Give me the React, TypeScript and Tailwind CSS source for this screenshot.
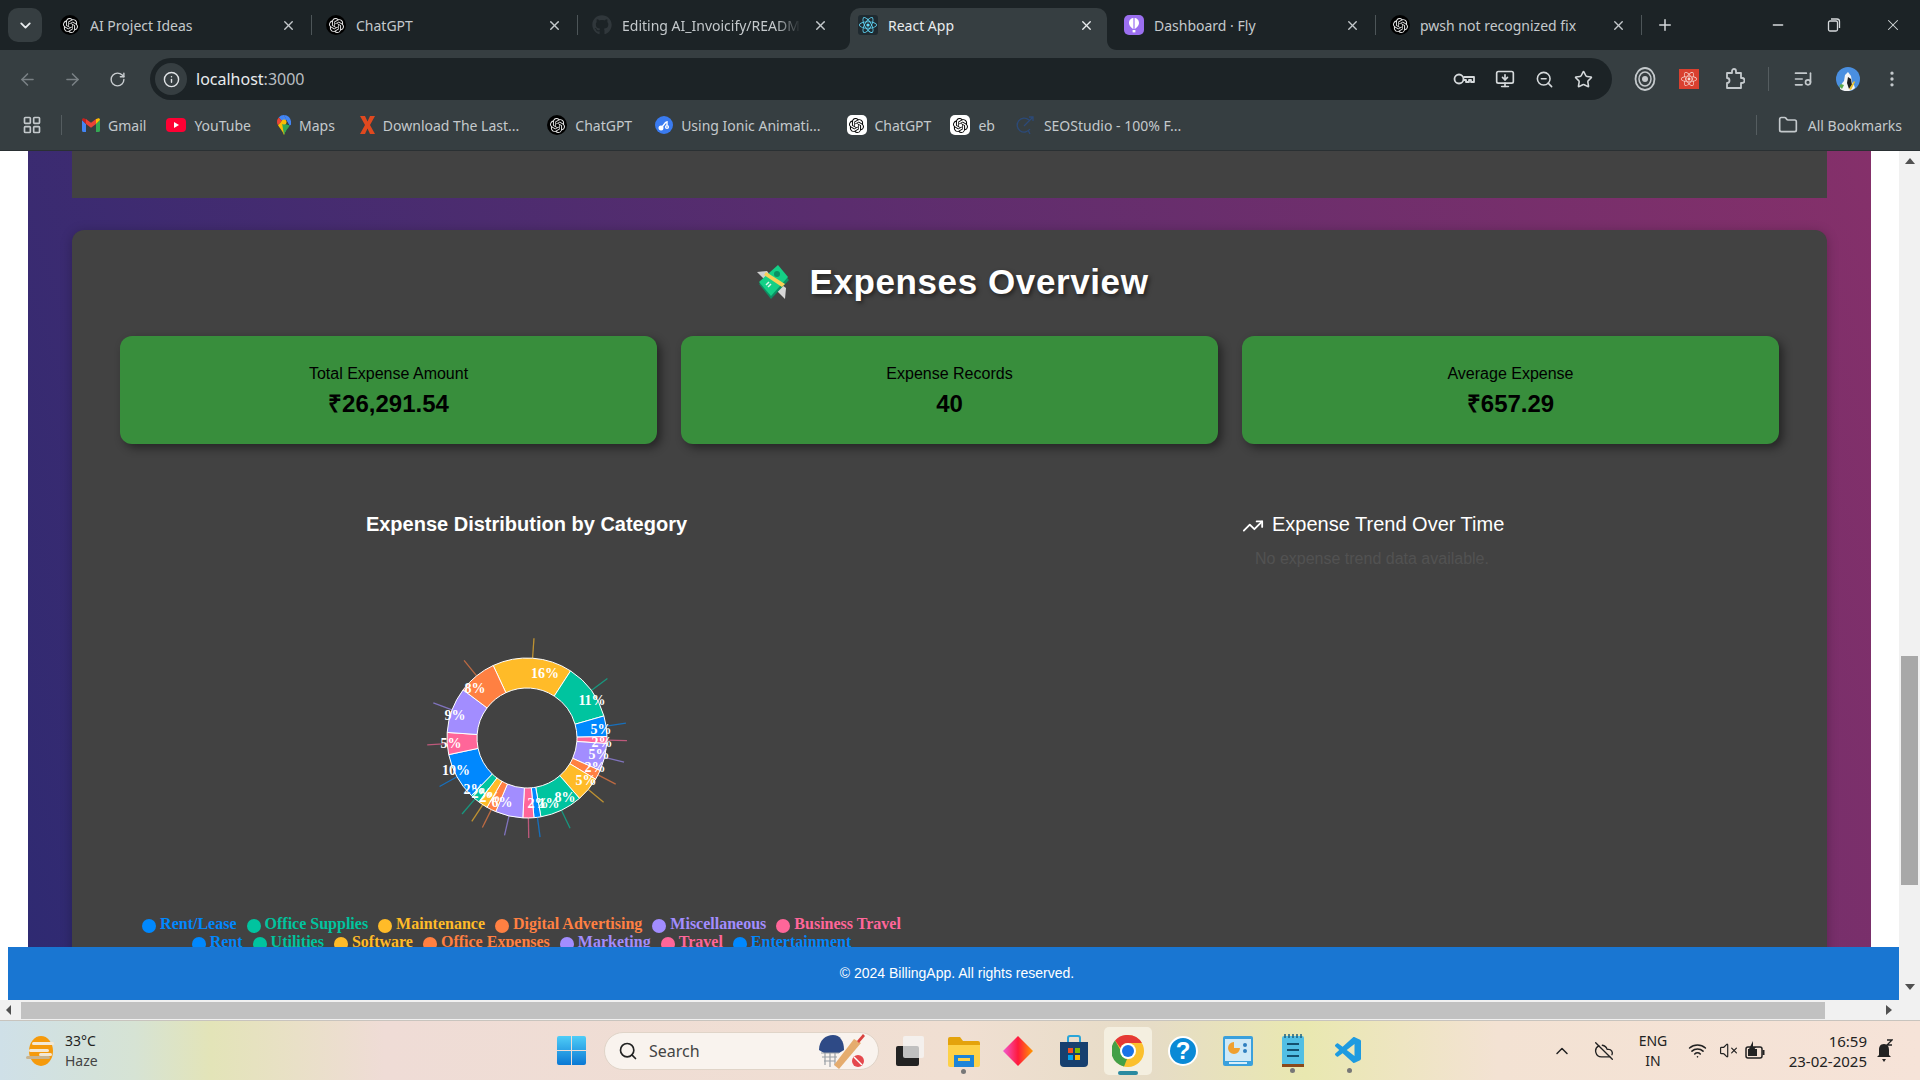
import React from 'react';
import { SiOpenai } from 'react-icons/si';
import { FaGithub, FaReact } from 'react-icons/fa';
import { VscVscode } from 'react-icons/vsc';
import {
  ArrowLeft, ArrowRight, RotateCw, Info, MonitorDown, ZoomOut, Star, ListMusic,
  EllipsisVertical, LayoutGrid, Folder, Plus, Minus, X, ChevronDown, ChevronUp, Search, TrendingUp,
  Wifi, VolumeX, CloudOff,
} from 'lucide-react';

const BLUE = '#0088fe';
const GREEN = '#00c49f';
const YELLOW = '#ffbb28';
const ORANGE = '#ff8042';
const PURPLE = '#a28dff';
const PINK = '#ff6699';

// angles are clockwise from the top
const slices = [
  { a: -25, b: 33, c: YELLOW },
  { a: 33, b: 74, c: GREEN },
  { a: 74, b: 89, c: BLUE },
  { a: 89, b: 94, c: PINK },
  { a: 94, b: 114, c: PURPLE },
  { a: 114, b: 121, c: ORANGE },
  { a: 121, b: 139, c: YELLOW },
  { a: 139, b: 170, c: GREEN },
  { a: 170, b: 175, c: BLUE },
  { a: 175, b: 183, c: PINK },
  { a: 183, b: 203, c: PURPLE },
  { a: 203, b: 210, c: ORANGE },
  { a: 210, b: 217, c: YELLOW },
  { a: 217, b: 224, c: GREEN },
  { a: 224, b: 258, c: BLUE },
  { a: 258, b: 274, c: PINK },
  { a: 274, b: 307, c: PURPLE },
  { a: 307, b: 335, c: ORANGE },
];

const pieLabels = [
  { t: '16%', x: 18, y: -65 },
  { t: '11%', x: 65, y: -38 },
  { t: '5%', x: 74, y: -9 },
  { t: '2%', x: 75, y: 4 },
  { t: '5%', x: 72, y: 16 },
  { t: '2%', x: 68, y: 29 },
  { t: '5%', x: 59, y: 42 },
  { t: '8%', x: 38, y: 59 },
  { t: '1%', x: 22, y: 65 },
  { t: '2%', x: 11, y: 65 },
  { t: '6%', x: -25, y: 64 },
  { t: '2%', x: -37, y: 59 },
  { t: '2%', x: -45, y: 55 },
  { t: '2%', x: -53, y: 51 },
  { t: '10%', x: -71, y: 32 },
  { t: '5%', x: -76, y: 5 },
  { t: '9%', x: -72, y: -23 },
  { t: '8%', x: -52, y: -50 },
];

const legend = [
  { name: 'Rent/Lease', c: BLUE },
  { name: 'Office Supplies', c: GREEN },
  { name: 'Maintenance', c: YELLOW },
  { name: 'Digital Advertising', c: ORANGE },
  { name: 'Miscellaneous', c: PURPLE },
  { name: 'Business Travel', c: PINK },
  { name: 'Rent', c: BLUE },
  { name: 'Utilities', c: GREEN },
  { name: 'Software', c: YELLOW },
  { name: 'Office Expenses', c: ORANGE },
  { name: 'Marketing', c: PURPLE },
  { name: 'Travel', c: PINK },
  { name: 'Entertainment', c: BLUE },
];

const polar = (r: number, deg: number) => {
  const rad = (deg * Math.PI) / 180;
  return [Math.sin(rad) * r, -Math.cos(rad) * r];
};

const slicePath = (a: number, b: number) => {
  const [x1, y1] = polar(80, a);
  const [x2, y2] = polar(80, b);
  const [x3, y3] = polar(50, b);
  const [x4, y4] = polar(50, a);
  return `M${x1} ${y1}A80 80 0 0 1 ${x2} ${y2}L${x3} ${y3}A50 50 0 0 0 ${x4} ${y4}Z`;
};

const DonutChart = () => (
  <svg width="400" height="375" viewBox="-200 -200 400 375" className="block">
    {slices.map((s, i) => {
      const mid = (s.a + s.b) / 2;
      const [x1, y1] = polar(80, mid);
      const [x2, y2] = polar(100, mid);
      return <line key={i} x1={x1} y1={y1} x2={x2} y2={y2} stroke={s.c} strokeOpacity="0.65" strokeWidth="1.3" />;
    })}
    {slices.map((s, i) => (
      <path key={i} d={slicePath(s.a, s.b)} fill={s.c} stroke="#fff" strokeWidth="1" />
    ))}
    {pieLabels.map((l, i) => (
      <text key={i} x={l.x} y={l.y} fill="#fff" fontSize="14" fontWeight="700" textAnchor="middle" dominantBaseline="central" fontFamily="'Liberation Serif', serif">
        {l.t}
      </text>
    ))}
  </svg>
);

const GptIcon = ({ light }: { light?: boolean }) => (
  <span className={`flex h-5 w-5 shrink-0 items-center justify-center ${light ? 'rounded-[5px] bg-white text-black' : 'rounded-full bg-black text-[#e8e8e8]'}`}>
    <SiOpenai size={15} />
  </span>
);

const FlyIcon = () => (
  <span className="flex h-5 w-5 shrink-0 items-center justify-center rounded-[5px] bg-[#9b6ff0]">
    <svg width="12" height="16" viewBox="0 0 12 16">
      <path d="M6 1C3 1 1 3 1 6c0 3 3 5 4 6h2c1-1 4-3 4-6 0-3-2-5-5-5z" fill="#fff" />
      <path d="M6 1v11" stroke="#9b6ff0" strokeWidth="1.2" />
      <rect x="4.6" y="13" width="2.8" height="2.4" fill="#fff" />
    </svg>
  </span>
);

const Tab = ({ icon, title, active, fade, sep }: { icon: React.ReactNode; title: string; active?: boolean; fade?: boolean; sep?: boolean }) => (
  <div className="relative flex h-[42px] w-[266px] shrink-0 pl-[10px]">
    {active && (
      <div className="absolute bottom-0 left-[2px] right-[7px] top-0 rounded-t-[10px] bg-[#363e41]">
        <svg className="absolute bottom-0 left-[-10px]" width="10" height="10" viewBox="0 0 10 10"><path d="M0 10C6 10 10 6 10 0V10Z" fill="#363e41" /></svg>
        <svg className="absolute bottom-0 right-[-10px]" width="10" height="10" viewBox="0 0 10 10"><path d="M10 10C4 10 0 6 0 0V10Z" fill="#363e41" /></svg>
      </div>
    )}
    <div className="relative flex h-full w-full items-center pb-2">
      {icon}
      <span className={`ml-[10px] w-[188px] overflow-hidden whitespace-nowrap text-[14px] ${active ? 'text-[#e9ecee]' : 'text-[#c4c9cc]'} ${fade ? '[mask-image:linear-gradient(90deg,#000_82%,transparent_95%)]' : ''}`}>
        {title}
      </span>
      <X size={15} strokeWidth={2.2} className={`ml-[3px] ${active ? 'text-[#e9ecee]' : 'text-[#c4c9cc]'}`} />
      {sep && <div className="ml-[15px] h-5 w-px bg-[#4d5558]" />}
    </div>
  </div>
);

const Bookmark = ({ icon, label, className }: { icon: React.ReactNode; label: string; className: string }) => (
  <div className={`flex shrink-0 items-center ${className}`}>
    {icon}
    <span className="ml-2 whitespace-nowrap text-[14px] text-[#c4c9cc]">{label}</span>
  </div>
);

const GmailIcon = () => (
  <svg width="18" height="14" viewBox="0 0 18 14" className="shrink-0">
    <path d="M0 2v10.500a1.500 1.500 0 0 0 1.500 1.500H4V6z" fill="#4285f4" />
    <path d="M14 6v8h2.500a1.500 1.500 0 0 0 1.500-1.500V2z" fill="#34a853" />
    <path d="M14 1v5l4-4c0-1.500-1.500-2.200-2.700-1.300z" fill="#fbbc04" />
    <path d="M4 6V1l5 3.800L14 1v5L9 9.800z" fill="#ea4335" />
    <path d="M0 2l4 4V1L2.700.700C1.500-.2 0 .500 0 2z" fill="#c5221f" />
  </svg>
);

const YoutubeIcon = () => (
  <svg width="20" height="14" viewBox="0 0 20 14" className="shrink-0">
    <rect width="20" height="14" rx="4" fill="#ff0033" />
    <path d="M8 4l5 3-5 3z" fill="#fff" />
  </svg>
);

const MapsIcon = () => (
  <svg width="14" height="20" viewBox="0 0 14 20" className="shrink-0">
    <path d="M7 0a7 7 0 0 1 7 7c0 1.500-.5 2.500-1.200 3.600L9.500 5z" fill="#4285f4" />
    <path d="M7 0a7 7 0 0 0-5.300 2.400L4.500 5.500 9.500 5A3 3 0 0 1 12.800 10.600z" fill="#4285f4" />
    <path d="M1.700 2.400A7 7 0 0 0 0 7c0 1.300.4 2.300 1 3.300L5 6z" fill="#ea4335" />
    <path d="M1 10.300C2.500 13 5.500 15.500 7 20l2-5.500-4-8.500z" fill="#fbbc04" />
    <path d="M7 20c1.500-4.500 4.300-6.500 5.800-9.400L5 8z" fill="#34a853" />
    <circle cx="7" cy="7" r="2.500" fill="#fbbc04" />
  </svg>
);

const XLogo = () => (
  <svg width="15" height="18" viewBox="0 0 15 18" className="shrink-0">
    <path d="M0 0h5l2.500 5.500L10 0h5l-5 9 5 9h-5l-2.500-5.500L5 18H0l5-9z" fill="#e0491f" />
  </svg>
);

const IonicIcon = () => (
  <span className="flex h-[18px] w-[18px] shrink-0 items-center justify-center rounded-full bg-[#3a7bf0]">
    <svg width="12" height="12" viewBox="0 0 12 12" fill="none" stroke="#fff" strokeWidth="1.4">
      <circle cx="3" cy="9" r="1.800" fill="#fff" />
      <circle cx="9" cy="8" r="1.400" />
      <path d="M4 8l4-5M9 2v4" />
    </svg>
  </span>
);

const SeoIcon = () => (
  <svg width="20" height="20" viewBox="0 0 20 20" fill="none" stroke="#2c4a78" strokeWidth="1.300" className="shrink-0">
    <path d="M13 5a7 7 0 1 0 1 9" />
    <path d="M8 11L17 2M13 2h4v4M12 15l2 4" />
  </svg>
);

const ExtensionRed = () => (
  <span className="flex h-5 w-5 items-center justify-center bg-[#d9402f] text-[#f6d9d4]">
    <FaReact size={16} />
  </span>
);

const PasswordKey = () => (
  <svg width="22" height="16" viewBox="0 0 22 16" fill="none" stroke="currentColor" strokeWidth="1.800">
    <circle cx="6" cy="8" r="4.500" />
    <path d="M10.500 6H21v5h-3V9h-2v2h-3V9h-2.500" strokeLinejoin="round" />
  </svg>
);

const TargetRings = () => (
  <svg width="22" height="24" viewBox="0 0 22 24" fill="none" stroke="currentColor">
    <ellipse cx="11" cy="12" rx="9.500" ry="11" strokeWidth="1.800" />
    <ellipse cx="11" cy="12" rx="6" ry="7" strokeWidth="1.500" />
    <circle cx="11" cy="12" r="3" fill="currentColor" stroke="none" />
  </svg>
);

const ExtensionPuzzle = () => (
  <svg width="20" height="22" viewBox="0 0 20 22" fill="none" stroke="currentColor" strokeWidth="1.800" strokeLinejoin="round">
    <path d="M2 5h5V3a2 2 0 0 1 4 0v2h5v5h1a2.500 2.500 0 0 1 0 5h-1v5H2v-5a2.500 2.500 0 0 0 0-5z" />
  </svg>
);

const Avatar = () => (
  <svg width="24" height="24" viewBox="0 0 24 24">
    <circle cx="12" cy="12" r="12" fill="#4a8fe0" />
    <path d="M4 22c1-5 3-7 4-8l1-6 3-3 3 4 1 6 2 3 1 3a12 12 0 0 1-15 1z" fill="#f4f4f4" />
    <path d="M12 10l3 2 1 6-3 4-2-6z" fill="#1e1e1e" />
    <path d="M13 22l5-8 1 1-4 8z" fill="#e8c02e" />
    <path d="M3 19l3 3 2-4-3-1z" fill="#5aa84a" />
  </svg>
);

const WindowsLogo = () => (
  <svg width="29" height="29" viewBox="0 0 29 29">
    <defs>
      <linearGradient id="win" x1="0" y1="0" x2="0" y2="1">
        <stop offset="0" stopColor="#4fcdf7" />
        <stop offset="1" stopColor="#0a78d4" />
      </linearGradient>
    </defs>
    <path d="M0 2a2 2 0 0 1 2-2h12v14H0zM15 0h12a2 2 0 0 1 2 2v12H15zM0 15h14v14H2a2 2 0 0 1-2-2zM15 15h14v12a2 2 0 0 1-2 2H15z" fill="url(#win)" />
  </svg>
);

const WeatherIcon = () => (
  <svg width="32" height="32" viewBox="0 0 32 32">
    <ellipse cx="17" cy="16" rx="12" ry="15" fill="#f59a0c" />
    <rect x="8" y="7" width="22" height="3" rx="1.500" fill="#f3e8d6" />
    <rect x="5" y="14" width="20" height="3" rx="1.500" fill="#f3e8d6" />
    <rect x="15" y="18" width="13" height="3" rx="1.500" fill="#f3e8d6" />
    <rect x="2" y="21" width="24" height="3" rx="1.500" fill="#c9b48f" />
  </svg>
);

const CricketIcon = () => (
  <svg width="52" height="38" viewBox="0 0 52 38">
    <path d="M2 18C2 8 9 3 16 3s11 6 11 15l-5 3H7z" fill="#2e4a86" />
    <path d="M4 21h18M5 25h15M7 29h11M8 21v12M13 21v14M18 21v12" stroke="#9aa0a6" fill="none" strokeWidth="1.200" />
    <path d="M17 33l5 4 22-26-7-4z" fill="#e5ac6e" />
    <path d="M40 9l6-7 2 2-6 7z" fill="#d9433f" />
    <circle cx="41" cy="29" r="6" fill="#e5484d" />
    <path d="M37 25l8 8" stroke="#fff" strokeWidth="1.500" />
  </svg>
);

const TaskViewIcon = () => (
  <svg width="30" height="30" viewBox="0 0 30 30">
    <rect x="2" y="10" width="23" height="20" rx="2" fill="#222" />
    <rect x="9" y="0" width="21" height="22" rx="2" fill="#f5f5f5" fillOpacity="0.75" />
  </svg>
);

const FolderIcon = () => (
  <svg width="32" height="32" viewBox="0 0 32 32">
    <path d="M0 4a2 2 0 0 1 2-2h10l3 4h15a2 2 0 0 1 2 2v4H0z" fill="#e4a30c" />
    <path d="M0 10h32v20a2 2 0 0 1-2 2H2a2 2 0 0 1-2-2z" fill="#fdd148" />
    <rect x="6" y="20" width="20" height="12" fill="#1c84d8" />
    <rect x="10" y="23" width="12" height="3" fill="#fdd148" />
  </svg>
);

const DiamondIcon = () => (
  <svg width="30" height="30" viewBox="0 0 30 30">
    <defs>
      <linearGradient id="dia" x1="0" y1="0" x2="1" y2="0">
        <stop offset="0" stopColor="#f25ad0" />
        <stop offset="0.5" stopColor="#ff1a3c" />
        <stop offset="1" stopColor="#ff9a00" />
      </linearGradient>
    </defs>
    <path d="M15 0l15 15-15 15L0 15z" fill="url(#dia)" />
  </svg>
);

const StoreIcon = () => (
  <svg width="30" height="32" viewBox="0 0 30 32">
    <path d="M9 8V3a2 2 0 0 1 2-2h8a2 2 0 0 1 2 2v5" fill="none" stroke="#2aa5d8" strokeWidth="2" />
    <path d="M1 7h28v21a4 4 0 0 1-4 4H5a4 4 0 0 1-4-4z" fill="#17406f" />
    <rect x="9" y="13" width="5" height="5" fill="#f25022" />
    <rect x="16" y="13" width="5" height="5" fill="#7fba00" />
    <rect x="9" y="20" width="5" height="5" fill="#00a4ef" />
    <rect x="16" y="20" width="5" height="5" fill="#ffb900" />
  </svg>
);

const ChromeIcon = () => (
  <svg width="32" height="32" viewBox="0 0 32 32">
    <circle cx="16" cy="16" r="16" fill="#fbc02d" />
    <path d="M16 0a16 16 0 0 1 13.900 8H16a8 8 0 0 0-7.500 5L3 5.500A16 16 0 0 1 16 0z" fill="#e53935" />
    <path d="M3 5.500l6 10.500a7 7 0 0 0 6 8l-3 7.500A16 16 0 0 1 3 5.500z" fill="#43a047" />
    <circle cx="16" cy="16" r="8" fill="#fff" />
    <circle cx="16" cy="16" r="6" fill="#1a73e8" />
  </svg>
);

const HelpIcon = () => (
  <span className="flex h-[30px] w-[30px] items-center justify-center rounded-full border-2 border-white bg-[#0a8ad6] text-[24px] font-bold leading-none text-white [font-family:'Liberation_Sans',sans-serif]">?</span>
);

const ChartIcon = () => (
  <svg width="30" height="30" viewBox="0 0 30 30">
    <rect width="30" height="30" rx="2" fill="#3aa0dc" />
    <rect x="2" y="3" width="26" height="22" fill="#cfe9f7" />
    <path d="M11 6a6 6 0 1 0 6 6h-6z" fill="#f0a030" />
    <circle cx="22" cy="9" r="2" fill="#2f7fc0" />
    <circle cx="22" cy="15" r="2" fill="#2f7fc0" />
    <rect x="6" y="26" width="18" height="2" fill="#d8eefa" />
  </svg>
);

const NotepadIcon = () => (
  <svg width="24" height="34" viewBox="0 0 24 34">
    <rect x="1" y="2" width="22" height="31" rx="2" fill="#52bfe4" />
    <rect x="1" y="30" width="22" height="3" fill="#8a4a1c" />
    <path d="M4 0v4M8 0v4M12 0v4M16 0v4M20 0v4" stroke="#1a5f80" strokeWidth="1.500" />
    <path d="M6 10h12M6 16h12M6 22h12" stroke="#14506f" strokeWidth="2" />
  </svg>
);

const BatteryIcon = () => (
  <svg width="20" height="20" viewBox="0 0 20 20">
    <rect x="1" y="6" width="16" height="11" rx="2" fill="none" stroke="#222" strokeWidth="1.500" />
    <rect x="3" y="8" width="9" height="7" fill="#222" />
    <rect x="17.500" y="9" width="2" height="5" fill="#222" />
    <path d="M8 0L4 8h3l-1 5 5-7H8z" fill="#222" />
  </svg>
);

const FocusBell = () => (
  <svg width="18" height="24" viewBox="0 0 18 24">
    <path d="M9 5c-4 0-5 3-5 6v5l-2 2h14l-2-2v-5c0-3-1-6-5-6z" fill="#222" />
    <path d="M7 20h4l-2 3z" fill="#222" />
    <path d="M12 1h5l-5 5h5" fill="none" stroke="#222" strokeWidth="1.300" />
  </svg>
);

const MoneyWings = () => (
  <svg width="32" height="34" viewBox="0 0 32 34">
    <path d="M0 7l10-1 6 8-8 1z" fill="#cfcfcf" />
    <path d="M28 34l1-11-8-6-2 8z" fill="#d6d6d6" />
    <path d="M2 19L21 2l11 13-18 19z" fill="#0d8f63" />
    <path d="M2 17L21 0l10 12-17 19z" fill="#14cf86" />
    <circle cx="20" cy="9" r="3" fill="#0d8f63" />
    <path d="M9 7l19 12-3 3L7 10z" fill="#f8d057" />
    <path d="M9 20l3-3M11 22l3-3" stroke="#dff8ec" strokeWidth="1.500" />
  </svg>
);

const ScrollTriangle = ({ dir }: { dir: 'up' | 'down' | 'left' | 'right' }) => {
  const pts = { up: '0,7 5,1 10,7', down: '0,2 10,2 5,8', left: '7,0 7,10 2,5', right: '2,0 2,10 8,5' }[dir];
  return (
    <svg width="10" height="10" viewBox="0 0 10 10" className="shrink-0">
      <polygon points={pts} fill="#505050" />
    </svg>
  );
};

const StatCard = ({ label, value }: { label: string; value: string }) => (
  <div className="flex h-[108px] flex-1 flex-col items-center rounded-xl bg-[#388e3c] pt-[28px] text-black shadow-[4px_4px_10px_rgba(0,0,0,0.45)]">
    <span className="text-[16px] leading-[20px]">{label}</span>
    <span className="mt-1 text-[24px] font-bold leading-[32px]">{value}</span>
  </div>
);

const App = () => {
  return (
    <div className="flex h-screen flex-col overflow-hidden bg-white [font-family:'Liberation_Sans',Arial,sans-serif]">
      <div className="shrink-0 [font-family:'Noto_Sans',sans-serif]">
        {/* Tab strip */}
        <div className="flex h-[50px] items-end bg-[#1c2326] pl-2">
          <div className="mb-2 flex h-[34px] w-[34px] shrink-0 items-center justify-center rounded-[10px] bg-[#363e41] text-[#e9ecee]">
            <ChevronDown size={17} strokeWidth={2.6} />
          </div>
          <div className="ml-2 flex">
            <Tab icon={<GptIcon />} title="AI Project Ideas" sep />
            <Tab icon={<GptIcon />} title="ChatGPT" sep />
            <Tab icon={<FaGithub size={20} className="shrink-0 text-[#30373b]" />} title="Editing AI_Invoicify/README.md" fade />
            <Tab icon={<span className="flex h-5 w-5 shrink-0 items-center justify-center rounded-[3px] bg-[#1f2a30] text-[#61dafb]"><FaReact size={18} /></span>} title="React App" active />
            <Tab icon={<FlyIcon />} title="Dashboard · Fly" sep />
            <Tab icon={<GptIcon />} title="pwsh not recognized fix" sep />
          </div>
          <div className="mb-2 flex h-[34px] items-center text-[#d5d9db]">
            <Plus size={18} className="ml-[10px]" />
          </div>
          <div className="mb-2 ml-[96px] flex h-[34px] items-center text-[#d5d9db]">
            <Minus size={16} />
            <svg width="16" height="16" viewBox="0 0 16 16" fill="none" stroke="currentColor" strokeWidth="1.300" className="ml-[40px]">
              <rect x="2.500" y="4" width="9" height="10" rx="1.500" />
              <path d="M5 2h6a2.500 2.500 0 0 1 2.500 2.500V11" />
            </svg>
            <X size={18} strokeWidth={1.4} className="ml-[42px]" />
          </div>
        </div>

        {/* Toolbar */}
        <div className="flex h-[50px] items-end bg-[#363e41] pl-[5px]">
          <div className="flex h-[42px] items-center">
            <div className="flex w-[45px] justify-center text-[#798084]"><ArrowLeft size={19} /></div>
            <div className="flex w-[45px] justify-center text-[#798084]"><ArrowRight size={19} /></div>
            <div className="flex w-[45px] justify-center text-[#c9cdd0]"><RotateCw size={17} /></div>
          </div>
          <div className="ml-[10px] flex h-[42px] w-[1462px] shrink-0 items-center rounded-full bg-[#1c2326] pl-[5px]">
            <span className="flex h-8 w-8 items-center justify-center rounded-full bg-[#363e41] text-[#e1e4e6]"><Info size={17} /></span>
            <span className="ml-[9px] text-[16px] text-[#e9ecee]">localhost<span className="text-[#b9bec1]">:3000</span></span>
            <div className="ml-auto mr-[19px] flex items-center gap-[20px] text-[#d5d9db]">
              <PasswordKey />
              <MonitorDown size={20} />
              <ZoomOut size={19} />
              <Star size={19} />
            </div>
          </div>
          <div className="ml-[22px] flex h-[42px] items-center text-[#c4c9cc]">
            <TargetRings />
            <span className="ml-[23px]"><ExtensionRed /></span>
            <span className="ml-[26px]"><ExtensionPuzzle /></span>
            <span className="ml-[23px] h-6 w-px bg-[#555d60]" />
            <ListMusic size={20} className="ml-[24px]" />
            <span className="ml-[23px]"><Avatar /></span>
            <EllipsisVertical size={20} className="ml-[22px]" />
          </div>
        </div>

        {/* Bookmarks */}
        <div className="flex h-[50px] items-center bg-[#363e41]">
          <LayoutGrid size={20} className="ml-[22px] text-[#c4c9cc]" />
          <div className="ml-[19px] h-5 w-px bg-[#555d60]" />
          <Bookmark className="ml-[20px]" icon={<GmailIcon />} label="Gmail" />
          <Bookmark className="ml-[20px]" icon={<YoutubeIcon />} label="YouTube" />
          <Bookmark className="ml-[26px]" icon={<MapsIcon />} label="Maps" />
          <Bookmark className="ml-[25px]" icon={<XLogo />} label="Download The Last..." />
          <Bookmark className="ml-[28px]" icon={<GptIcon />} label="ChatGPT" />
          <Bookmark className="ml-[23px]" icon={<IonicIcon />} label="Using Ionic Animati..." />
          <Bookmark className="ml-[26px]" icon={<GptIcon light />} label="ChatGPT" />
          <Bookmark className="ml-[19px]" icon={<GptIcon light />} label="eb" />
          <Bookmark className="ml-[21px]" icon={<SeoIcon />} label="SEOStudio - 100% F..." />
          <div className="ml-auto h-5 w-px bg-[#555d60]" />
          <Folder size={20} className="ml-[21px] text-[#c4c9cc]" />
          <span className="ml-[10px] mr-[18px] text-[14px] text-[#c4c9cc]">All Bookmarks</span>
        </div>
      </div>
      <div className="h-px shrink-0 bg-[#2a3033]" />

      {/* Page */}
      <div className="flex min-h-0 flex-1">
        <div className="flex min-w-0 flex-1 flex-col">
          <div className="flex min-h-0 flex-1 flex-col overflow-hidden">
            <div className="mx-[28px] flex h-full flex-col bg-[linear-gradient(70deg,#2f2a72_0%,#85306a_100%)] px-[44px]">
              <div className="h-[47px] shrink-0 bg-[#424242]" />
              <section className="mt-[32px] h-[900px] shrink-0 rounded-t-xl bg-[#424242] px-[48px] shadow-[0_2px_12px_rgba(0,0,0,0.25)]">
                <h2 className="mt-[29px] flex items-center justify-center pl-[7px] pt-[1px] text-[35px] font-bold leading-[44px] tracking-[0.6px] text-white [text-shadow:2px_2px_4px_rgba(0,0,0,0.5)]">
                  <span className="mr-[20px]"><MoneyWings /></span>
                  Expenses Overview
                </h2>
                <div className="mt-[32px] flex gap-6">
                  <StatCard label="Total Expense Amount" value="₹26,291.54" />
                  <StatCard label="Expense Records" value="40" />
                  <StatCard label="Average Expense" value="₹657.29" />
                </div>
                <div className="mt-[66px] flex">
                  <div className="flex w-[813px] shrink-0 flex-col items-center">
                    <h3 className="text-[20px] font-bold leading-[28px] text-white">Expense Distribution by Category</h3>
                    <DonutChart />
                    <ul className="mt-[2px] flex w-full flex-wrap justify-center [font-family:'Liberation_Serif',serif]">
                      {legend.map((l) => (
                        <li key={l.name} className="mr-[10px] flex items-center text-[16px] font-bold leading-[18px]" style={{ color: l.c }}>
                          <span className="mr-1 mt-[3px] h-[14px] w-[14px] rounded-full" style={{ background: l.c }} />
                          {l.name}
                        </li>
                      ))}
                    </ul>
                  </div>
                  <div className="ml-[309px] flex-1">
                    <h3 className="flex items-center text-[20px] leading-[28px] text-white">
                      <TrendingUp size={22} className="mr-[8px] mt-[3px]" />
                      Expense Trend Over Time
                    </h3>
                    <p className="ml-[13px] mt-[9px] text-[16px] leading-[24px] text-[#525252]">No expense trend data available.</p>
                  </div>
                </div>
              </section>
            </div>
          </div>
          <footer className="ml-2 flex h-[53px] shrink-0 items-center justify-center bg-[#1976d2] pl-[7px] text-[14px] text-white">
            © 2024 BillingApp. All rights reserved.
          </footer>
        </div>

        {/* Vertical scrollbar */}
        <div className="flex w-[21px] shrink-0 flex-col items-center bg-[#f1f1f1]">
          <div className="mt-[6px]"><ScrollTriangle dir="up" /></div>
          <div className="mt-[489px] h-[229px] w-[17px] bg-[#a8a8a8]" />
          <div className="mt-[97px]"><ScrollTriangle dir="down" /></div>
        </div>
      </div>

      {/* Horizontal scrollbar */}
      <div className="flex h-[20px] shrink-0 items-center bg-[#f1f1f1] pl-[4px]">
        <ScrollTriangle dir="left" />
        <div className="ml-[7px] h-[17px] w-[1804px] bg-[#c1c1c1]" />
        <div className="ml-[59px]"><ScrollTriangle dir="right" /></div>
      </div>

      {/* Taskbar */}
      <div className="flex h-[60px] shrink-0 items-center border-t border-[#c8c4be] bg-[linear-gradient(90deg,#cfe0e8_0%,#d6e3d4_7%,#e3e4b8_11%,#efdcd6_20%,#f0dfd2_50%,#e6dcc6_60%,#e9e8b0_68%,#f3e2d3_78%,#f6e3d8_100%)] text-[#222] [font-family:'Noto_Sans',sans-serif]">
        <div className="ml-[24px]"><WeatherIcon /></div>
        <div className="ml-[9px] flex w-[60px] flex-col text-[14px] leading-[20px]">
          <span>33°C</span>
          <span className="text-[#444]">Haze</span>
        </div>
        <div className="ml-[432px]"><WindowsLogo /></div>
        <div className="ml-[18px] flex h-[38px] w-[275px] items-center rounded-full border border-[#e0d4c8] bg-[#f9f3ee] pl-[13px]">
          <Search size={20} strokeWidth={2} className="text-[#222]" />
          <span className="ml-[11px] text-[16px] text-[#444]">Search</span>
          <span className="ml-auto mr-[9px]"><CricketIcon /></span>
        </div>
        <div className="ml-[15px]"><TaskViewIcon /></div>
        <div className="relative ml-[24px]">
          <FolderIcon />
          <span className="absolute -bottom-[7px] left-[13px] h-[5px] w-[5px] rounded-full bg-[#777]" />
        </div>
        <div className="ml-[23px]"><DiamondIcon /></div>
        <div className="ml-[26px]"><StoreIcon /></div>
        <div className="relative ml-[15px] flex h-[48px] w-[48px] items-center justify-center rounded-[5px] bg-[#f4efe0]">
          <ChromeIcon />
          <span className="absolute bottom-0 left-[14px] h-[4px] w-[20px] rounded-[2px] bg-[#2a8aa0]" />
        </div>
        <div className="ml-[16px]"><HelpIcon /></div>
        <div className="ml-[25px]"><ChartIcon /></div>
        <div className="relative ml-[28px]">
          <NotepadIcon />
          <span className="absolute -bottom-[5px] left-[9px] h-[5px] w-[5px] rounded-full bg-[#777]" />
        </div>
        <div className="relative ml-[28px]">
          <VscVscode size={32} className="text-[#1e9be0]" />
          <span className="absolute -bottom-[6px] left-[14px] h-[5px] w-[5px] rounded-full bg-[#777]" />
        </div>
        <ChevronUp size={20} strokeWidth={1.800} className="ml-[187px]" />
        <CloudOff size={20} strokeWidth={1.600} className="ml-[22px]" />
        <div className="ml-[17px] flex w-[44px] flex-col items-center text-[14px] leading-[20px]">
          <span>ENG</span>
          <span>IN</span>
        </div>
        <Wifi size={19} className="ml-[13px]" />
        <VolumeX size={19} strokeWidth={1.500} className="ml-[12px]" />
        <span className="ml-[7px]"><BatteryIcon /></span>
        <div className="ml-[19px] flex w-[83px] flex-col items-end text-[15px] leading-[20px]">
          <span>16:59</span>
          <span>23-02-2025</span>
        </div>
        <span className="ml-[8px]"><FocusBell /></span>
      </div>
    </div>
  );
};

export default App;
